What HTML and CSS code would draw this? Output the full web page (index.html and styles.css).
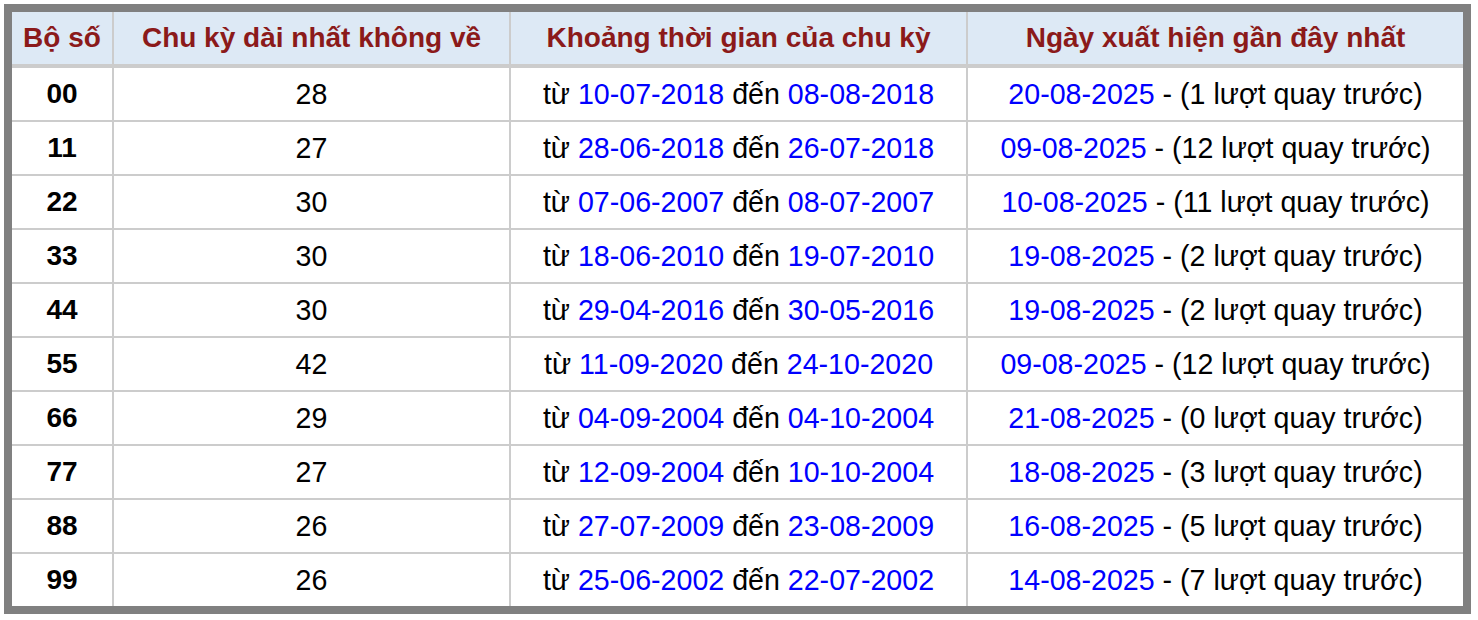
FILE: index.html
```html
<!DOCTYPE html>
<html lang="vi">
<head>
<meta charset="utf-8">
<title>Chu kỳ dài nhất không về</title>
<link rel="stylesheet" href="styles.css">
</head>
<body>
<div class="board">
  <div class="grid">
    <div class="cell head">Bộ số</div>
    <div class="cell head">Chu kỳ dài nhất không về</div>
    <div class="cell head">Khoảng thời gian của chu kỳ</div>
    <div class="cell head">Ngày xuất hiện gần đây nhất</div>

    <div class="cell num">00</div><div class="cell">28</div>
    <div class="cell">từ <span class="d">10-07-2018</span> đến <span class="d">08-08-2018</span></div>
    <div class="cell"><span class="d">20-08-2025</span> - (1 lượt quay trước)</div>

    <div class="cell num">11</div><div class="cell">27</div>
    <div class="cell">từ <span class="d">28-06-2018</span> đến <span class="d">26-07-2018</span></div>
    <div class="cell"><span class="d">09-08-2025</span> - (12 lượt quay trước)</div>

    <div class="cell num">22</div><div class="cell">30</div>
    <div class="cell">từ <span class="d">07-06-2007</span> đến <span class="d">08-07-2007</span></div>
    <div class="cell"><span class="d">10-08-2025</span> - (11 lượt quay trước)</div>

    <div class="cell num">33</div><div class="cell">30</div>
    <div class="cell">từ <span class="d">18-06-2010</span> đến <span class="d">19-07-2010</span></div>
    <div class="cell"><span class="d">19-08-2025</span> - (2 lượt quay trước)</div>

    <div class="cell num">44</div><div class="cell">30</div>
    <div class="cell">từ <span class="d">29-04-2016</span> đến <span class="d">30-05-2016</span></div>
    <div class="cell"><span class="d">19-08-2025</span> - (2 lượt quay trước)</div>

    <div class="cell num">55</div><div class="cell">42</div>
    <div class="cell">từ <span class="d">11-09-2020</span> đến <span class="d">24-10-2020</span></div>
    <div class="cell"><span class="d">09-08-2025</span> - (12 lượt quay trước)</div>

    <div class="cell num">66</div><div class="cell">29</div>
    <div class="cell">từ <span class="d">04-09-2004</span> đến <span class="d">04-10-2004</span></div>
    <div class="cell"><span class="d">21-08-2025</span> - (0 lượt quay trước)</div>

    <div class="cell num">77</div><div class="cell">27</div>
    <div class="cell">từ <span class="d">12-09-2004</span> đến <span class="d">10-10-2004</span></div>
    <div class="cell"><span class="d">18-08-2025</span> - (3 lượt quay trước)</div>

    <div class="cell num">88</div><div class="cell">26</div>
    <div class="cell">từ <span class="d">27-07-2009</span> đến <span class="d">23-08-2009</span></div>
    <div class="cell"><span class="d">16-08-2025</span> - (5 lượt quay trước)</div>

    <div class="cell num">99</div><div class="cell">26</div>
    <div class="cell">từ <span class="d">25-06-2002</span> đến <span class="d">22-07-2002</span></div>
    <div class="cell"><span class="d">14-08-2025</span> - (7 lượt quay trước)</div>
  </div>
</div>
</body>
</html>
```

FILE: styles.css
```css
html, body {
  margin: 0;
  padding: 0;
  background: #ffffff;
}

body {
  padding: 4px;
  font-family: "Liberation Sans", Arial, Helvetica, sans-serif;
}

.board {
  display: inline-block;
  vertical-align: top;
  border: 8px solid #808080;
  background: #cccccc;
}

.grid {
  display: grid;
  grid-template-columns: 100px 395px 455px 495px;
  grid-template-rows: 54px;
  grid-auto-rows: 52px;
  gap: 2px;
}

.cell {
  background: #ffffff;
  text-align: center;
  line-height: 52px;
  font-size: 28.6px;
  color: #000000;
  white-space: nowrap;
}

.head {
  background: #dde9f5;
  color: #8b1a1a;
  font-weight: bold;
  font-size: 28px;
  border-bottom: 2px solid #cccccc;
}

.num {
  font-weight: bold;
  font-size: 28px;
}

.d {
  color: #0000ff;
}
```
